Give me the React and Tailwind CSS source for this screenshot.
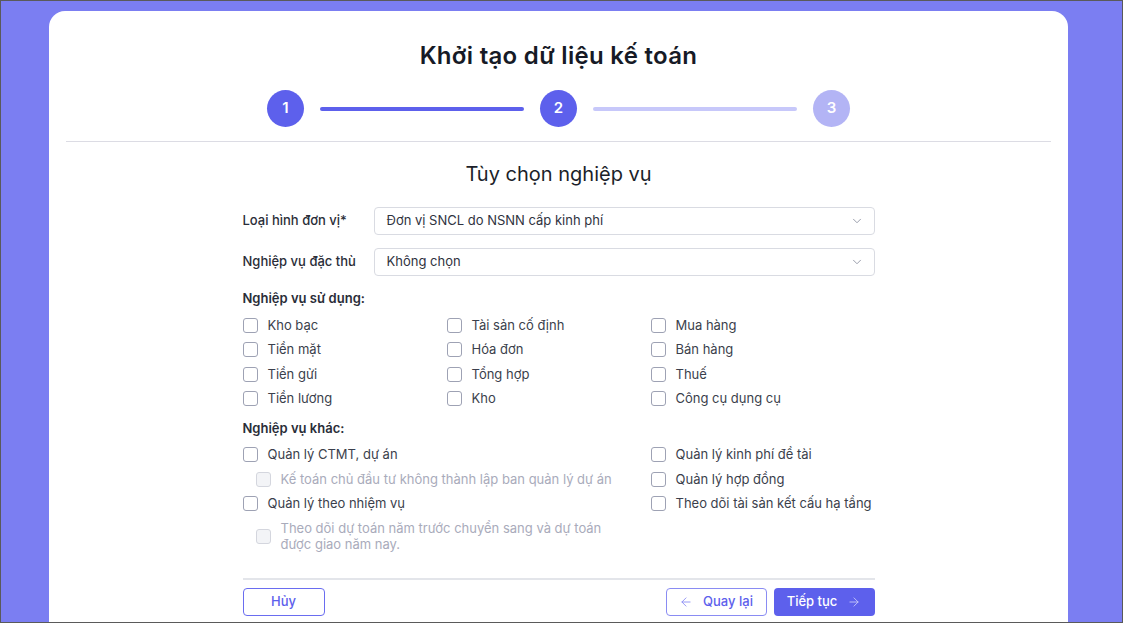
import { ChevronDown, ArrowLeft, ArrowRight } from 'lucide-react'

const USED = [
  ['Kho bạc', 'Tài sản cố định', 'Mua hàng'],
  ['Tiền mặt', 'Hóa đơn', 'Bán hàng'],
  ['Tiền gửi', 'Tổng hợp', 'Thuế'],
  ['Tiền lương', 'Kho', 'Công cụ dụng cụ'],
]

function Box({ disabled = false }) {
  return (
    <span
      className={`inline-block h-[15px] w-[15px] shrink-0 rounded-[3px] border ${
        disabled ? 'border-[#d4d6de] bg-[#f3f4f7]' : 'border-[#9ea2b4] bg-white'
      }`}
    />
  )
}

function Check({ label, disabled = false, indent = false }) {
  return (
    <label className={`flex h-[24.5px] items-center gap-[10px] ${indent ? 'pl-[13px]' : ''}`}>
      <Box disabled={disabled} />
      <span className={disabled ? 'text-[#a9abbb]' : 'text-[#3b3f4c]'}>{label}</span>
    </label>
  )
}

function Select({ label, value }) {
  return (
    <div className="flex items-center">
      <span className="w-[131px] font-medium text-[#2a2d38]">{label}</span>
      <div className="flex h-[28px] flex-1 items-center justify-between rounded-[4px] border border-[#d9dbe2] pl-[12px] pr-[10px] text-[#2f3340]">
        <span>{value}</span>
        <ChevronDown size={14} strokeWidth={1.5} className="text-[#8d90a0]" />
      </div>
    </div>
  )
}

function Step({ n, active }) {
  return (
    <div
      className={`flex h-[37px] w-[37px] items-center justify-center rounded-full text-[15px] font-semibold text-white ${
        active ? 'bg-[#5d60ec]' : 'bg-[#b3b4f5]'
      }`}
    >
      {n}
    </div>
  )
}

export default function App() {
  return (
    <div
      className="h-[623px] w-full overflow-hidden border border-[#5a5a5a] bg-[#7b7ef2] text-[13px]"
      style={{ fontFamily: 'Inter, "Noto Sans", sans-serif' }}
    >
      <div className="ml-[48px] mt-[10px] h-[640px] w-[1019px] rounded-t-[16px] bg-white">
        <h1 className="pt-[29px] text-center text-[24px] font-semibold leading-[32px] tracking-[0.3px] text-[#161a26]">
          Khởi tạo dữ liệu kế toán
        </h1>
        <div className="mt-[18px] flex items-center justify-center">
          <Step n={1} active />
          <div className="mx-4 h-1 w-[204px] rounded-full bg-[#5d60ec]" />
          <Step n={2} active />
          <div className="mx-4 h-1 w-[204px] rounded-full bg-[#c7c8fa]" />
          <Step n={3} />
        </div>
        <div className="mx-[17px] mt-[14px] h-px bg-[#dcdce4]" />

        <h2 className="mt-[18px] text-center text-[20px] leading-[28px] text-[#1c1f2a]">Tùy chọn nghiệp vụ</h2>

        <div className="mx-auto mt-[19px] w-[632px]">
          <div className="flex flex-col gap-[13px]">
            <Select label="Loại hình đơn vị*" value="Đơn vị SNCL do NSNN cấp kinh phí" />
            <Select label="Nghiệp vụ đặc thù" value="Không chọn" />
          </div>

          <div className="mt-[13px] font-semibold leading-[18px] text-[#2a2d38]">Nghiệp vụ sử dụng:</div>
          <div className="mt-[6px] grid grid-cols-[204px_204px_1fr]">
            {USED.flat().map((l) => (
              <Check key={l} label={l} />
            ))}
          </div>

          <div className="mt-[7.5px] font-semibold leading-[18px] text-[#2a2d38]">Nghiệp vụ khác:</div>
          <div className="mt-[6px] grid grid-cols-[408px_1fr]">
            <div>
              <Check label="Quản lý CTMT, dự án" />
              <Check label="Kế toán chủ đầu tư không thành lập ban quản lý dự án" disabled indent />
              <Check label="Quản lý theo nhiệm vụ" />
              <div className="flex items-center gap-[10px] pl-[13px] pt-[4px]">
                <Box disabled />
                <span className="leading-[16px] text-[#a9abbb]">
                  Theo dõi dự toán năm trước chuyển sang và dự toán
                  <br />
                  được giao năm nay.
                </span>
              </div>
            </div>
            <div>
              <Check label="Quản lý kinh phí đề tài" />
              <Check label="Quản lý hợp đồng" />
              <Check label="Theo dõi tài sản kết cấu hạ tầng" />
            </div>
          </div>

          <div className="mt-[26px] h-[2px] bg-[#e3e5ea]" />
          <div className="mt-[8px] flex items-center justify-between">
            <button className="h-[28px] w-[82px] rounded-[4px] border border-[#6a6df0] font-medium text-[#5d60ec]">
              Hủy
            </button>
            <div className="flex gap-[7px]">
              <button className="flex h-[28px] w-[101px] items-center justify-center gap-[10px] rounded-[4px] border border-[#8a8cf3] font-medium text-[#5d60ec]">
                <ArrowLeft size={14} strokeWidth={1.5} className="text-[#8a8cf3]" />
                Quay lại
              </button>
              <button className="flex h-[28px] w-[101px] items-center justify-center gap-[10px] rounded-[4px] bg-[#5d60ec] font-medium text-white">
                Tiếp tục
                <ArrowRight size={14} strokeWidth={1.5} className="text-[#c9caf9]" />
              </button>
            </div>
          </div>
        </div>
      </div>
    </div>
  )
}
